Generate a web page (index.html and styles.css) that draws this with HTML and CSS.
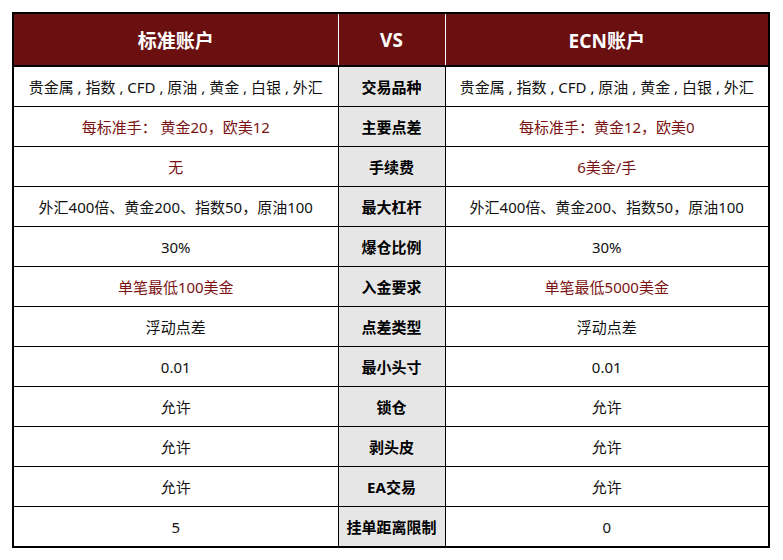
FILE: index.html
```html
<!DOCTYPE html>
<html lang="zh">
<head>
<meta charset="utf-8">
<link rel="stylesheet" href="styles.css">
</head>
<body>
<table class="cmp">
  <colgroup><col class="c-side"><col class="c-mid"><col class="c-side2"></colgroup>
  <thead>
    <tr><th>标准账户</th><th>VS</th><th>ECN账户</th></tr>
  </thead>
  <tbody>
    <tr><td>贵金属 , 指数 , CFD , 原油 , 黄金 , 白银 , 外汇</td><td class="mid">交易品种</td><td>贵金属 , 指数 , CFD , 原油 , 黄金 , 白银 , 外汇</td></tr>
    <tr><td class="red">每标准手： 黄金20，欧美12</td><td class="mid">主要点差</td><td class="red">每标准手：黄金12，欧美0</td></tr>
    <tr><td class="red">无</td><td class="mid">手续费</td><td class="red">6美金/手</td></tr>
    <tr><td>外汇400倍、黄金200、指数50，原油100</td><td class="mid">最大杠杆</td><td>外汇400倍、黄金200、指数50，原油100</td></tr>
    <tr><td>30%</td><td class="mid">爆仓比例</td><td>30%</td></tr>
    <tr><td class="red">单笔最低100美金</td><td class="mid">入金要求</td><td class="red">单笔最低5000美金</td></tr>
    <tr><td>浮动点差</td><td class="mid">点差类型</td><td>浮动点差</td></tr>
    <tr><td>0.01</td><td class="mid">最小头寸</td><td>0.01</td></tr>
    <tr><td>允许</td><td class="mid">锁仓</td><td>允许</td></tr>
    <tr><td>允许</td><td class="mid">剥头皮</td><td>允许</td></tr>
    <tr><td>允许</td><td class="mid">EA交易</td><td>允许</td></tr>
    <tr><td>5</td><td class="mid">挂单距离限制</td><td>0</td></tr>
  </tbody>
</table>
</body>
</html>
```
FILE: styles.css
```css
html, body {
  margin: 0;
  padding: 0;
  background: #ffffff;
}
body {
  padding: 12px;
  font-family: "Noto Sans", "Noto Sans CJK SC", sans-serif;
}
.cmp {
  width: 758px;
  border-collapse: collapse;
  border: 2px solid #000;
  table-layout: fixed;
}
.c-side { width: 325px; }
.c-mid { width: 107px; }
.c-side2 { width: 324px; }
.cmp th {
  background: #6b1010;
  color: #ffffff;
  font-size: 19px;
  font-weight: 700;
  height: 51px;
  padding: 0;
  border-left: 1px solid #ffffff;
  border-right: 1px solid #ffffff;
  border-bottom: 2px solid #000;
  text-align: center;
  vertical-align: middle;
}
.cmp th:first-child { border-left: 2px solid #000; }
.cmp th:last-child { border-right: 2px solid #000; }
.cmp td {
  height: 39px;
  padding: 0;
  border: 1px solid #000;
  text-align: center;
  vertical-align: middle;
  font-size: 15px;
  color: #111;
  line-height: 18px;
}
.cmp td.mid {
  background: #e6e6e6;
  font-weight: 700;
  color: #000;
}
.cmp td.red {
  color: #7a1212;
}
```
